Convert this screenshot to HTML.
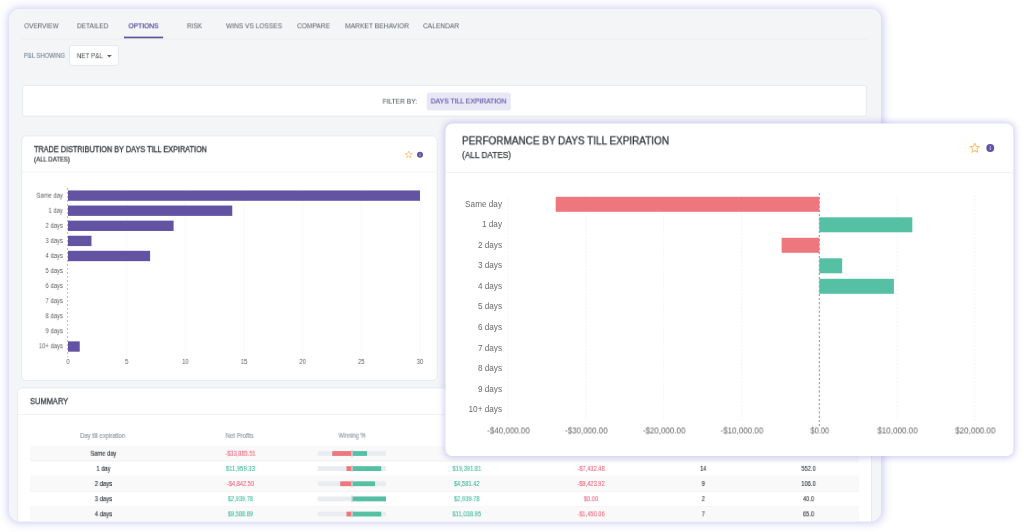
<!DOCTYPE html>
<html lang="en">
<head>
<meta charset="utf-8">
<title>Options - Days Till Expiration</title>
<style>
html,body{margin:0;padding:0;background:#fff;}
body{width:1024px;height:532px;position:relative;overflow:hidden;font-family:"Liberation Sans", sans-serif;}
#stage div,#stage svg{position:absolute;box-sizing:border-box;}
.t{position:absolute;white-space:pre;line-height:1;display:block;will-change:transform;}
</style>
</head>
<body>
<div id="stage">
<!-- layer 0 -->
<div style="left:9px;top:9px;width:872px;height:512px;background:#f4f5f7;border-radius:10px;box-shadow:0.5px 0.5px 9px 1px rgba(105,100,210,.34);"></div>
<svg style="left:0;top:0" width="1024" height="532" viewBox="0 0 1024 532">
<defs><clipPath id="clip0"><rect x="9.0" y="9.0" width="872.3" height="512.4" rx="10"/></clipPath></defs><g clip-path="url(#clip0)">
<rect x="9.00" y="9.00" width="872.30" height="512.40" fill="#f4f5f7" rx="10.00"/>
<rect x="22.00" y="38.60" width="845.00" height="0.80" fill="#e8eaed"/>
<rect x="124.00" y="36.60" width="39.10" height="1.70" fill="#6254a3"/>
<rect x="69.50" y="45.60" width="48.90" height="19.80" fill="#fff" rx="2.10" stroke="#e0e3e7" stroke-width="0.8"/>
<path d="M107 54.9h4.8l-2.4 2.5z" fill="#5d636a"/>
<rect x="22.68" y="85.58" width="843.55" height="30.45" fill="#fff" rx="1.12" stroke="#e4e6e9" stroke-width="0.75"/>
<rect x="426.60" y="92.60" width="84.20" height="18.00" fill="#e8e7f6" rx="3.00"/>
<rect x="21.65" y="135.85" width="415.50" height="244.60" fill="#fff" rx="4.55" stroke="#e7e9ec" stroke-width="0.9"/>
<rect x="22.00" y="171.70" width="415.00" height="0.80" fill="#f0f1f3"/>
<polygon points="408.80,151.00 409.78,153.35 412.32,153.56 410.38,155.21 410.97,157.69 408.80,156.36 406.63,157.69 407.22,155.21 405.28,153.56 407.82,153.35" fill="none" stroke="#fac373" stroke-width="0.85" stroke-linejoin="round"/>
<circle cx="420" cy="154.8" r="3.0" fill="#6254a3"/><circle cx="420" cy="153.54000000000002" r="0.39" fill="#fff" opacity=".8"/><rect x="419.67" y="154.35" width="0.66" height="1.80" fill="#fff" opacity=".8"/>
<line x1="126.67" y1="188" x2="126.67" y2="356" stroke="#f0f0f0" stroke-width="0.7" stroke-dasharray="1.5 1.2"/>
<line x1="185.33" y1="188" x2="185.33" y2="356" stroke="#f0f0f0" stroke-width="0.7" stroke-dasharray="1.5 1.2"/>
<line x1="244.00" y1="188" x2="244.00" y2="356" stroke="#f0f0f0" stroke-width="0.7" stroke-dasharray="1.5 1.2"/>
<line x1="302.67" y1="188" x2="302.67" y2="356" stroke="#f0f0f0" stroke-width="0.7" stroke-dasharray="1.5 1.2"/>
<line x1="361.33" y1="188" x2="361.33" y2="356" stroke="#f0f0f0" stroke-width="0.7" stroke-dasharray="1.5 1.2"/>
<line x1="420.00" y1="188" x2="420.00" y2="356" stroke="#f0f0f0" stroke-width="0.7" stroke-dasharray="1.5 1.2"/>
<line x1="67.6" y1="188" x2="67.6" y2="357" stroke="#9aacbe" stroke-width="0.8" stroke-dasharray="2 2"/>
<rect x="68.00" y="190.45" width="352.00" height="10.35" fill="#6254a3"/>
<rect x="68.00" y="205.54" width="164.27" height="10.35" fill="#6254a3"/>
<rect x="68.00" y="220.63" width="105.60" height="10.35" fill="#6254a3"/>
<rect x="68.00" y="235.72" width="23.47" height="10.35" fill="#6254a3"/>
<rect x="68.00" y="250.81" width="82.13" height="10.35" fill="#6254a3"/>
<rect x="68.00" y="341.35" width="11.73" height="10.35" fill="#6254a3"/>
<rect x="17.70" y="387.90" width="853.80" height="159.10" fill="#fff" rx="4.55" stroke="#e7e9ec" stroke-width="0.9"/>
<rect x="18.00" y="414.00" width="853.00" height="0.80" fill="#f0f1f3"/>
<rect x="30.00" y="445.90" width="829.00" height="15.10" fill="#f9f9fa"/>
<rect x="30.00" y="460.70" width="829.00" height="0.70" fill="#eeeef0"/>
<rect x="30.00" y="475.80" width="829.00" height="0.70" fill="#eeeef0"/>
<rect x="30.00" y="476.15" width="829.00" height="15.10" fill="#f9f9fa"/>
<rect x="30.00" y="490.95" width="829.00" height="0.70" fill="#eeeef0"/>
<rect x="30.00" y="506.10" width="829.00" height="0.70" fill="#eeeef0"/>
<rect x="30.00" y="506.45" width="829.00" height="15.10" fill="#f9f9fa"/>
<rect x="30.00" y="521.25" width="829.00" height="0.70" fill="#eeeef0"/>
<rect x="317.75" y="451.10" width="68.25" height="4.80" fill="#e9edf1"/>
<rect x="332.25" y="451.10" width="19.25" height="4.80" fill="#ed777c"/>
<rect x="352.50" y="451.10" width="14.50" height="4.80" fill="#56c0a5"/>
<rect x="351.60" y="449.70" width="0.80" height="7.40" fill="#bcc1c8"/>
<rect x="317.75" y="466.20" width="68.25" height="4.80" fill="#e9edf1"/>
<rect x="346.50" y="466.20" width="5.00" height="4.80" fill="#ed777c"/>
<rect x="352.50" y="466.20" width="28.75" height="4.80" fill="#56c0a5"/>
<rect x="351.60" y="464.80" width="0.80" height="7.40" fill="#bcc1c8"/>
<rect x="317.75" y="481.35" width="68.25" height="4.80" fill="#e9edf1"/>
<rect x="340.25" y="481.35" width="11.25" height="4.80" fill="#ed777c"/>
<rect x="352.50" y="481.35" width="22.50" height="4.80" fill="#56c0a5"/>
<rect x="351.60" y="479.95" width="0.80" height="7.40" fill="#bcc1c8"/>
<rect x="317.75" y="496.50" width="68.25" height="4.80" fill="#e9edf1"/>
<rect x="352.50" y="496.50" width="33.50" height="4.80" fill="#56c0a5"/>
<rect x="351.60" y="495.10" width="0.80" height="7.40" fill="#bcc1c8"/>
<rect x="317.75" y="511.65" width="68.25" height="4.80" fill="#e9edf1"/>
<rect x="346.50" y="511.65" width="5.00" height="4.80" fill="#ed777c"/>
<rect x="352.50" y="511.65" width="28.75" height="4.80" fill="#56c0a5"/>
<rect x="351.60" y="510.25" width="0.80" height="7.40" fill="#bcc1c8"/>
</g>
</svg>
<span class="t" style="left:24px;top:22px;font-size:7.4px;color:#555a62;transform:translate3d(0.20px,0.30px,0) scaleX(0.8664);transform-origin:0 50%;">OVERVIEW</span>
<span class="t" style="left:77px;top:22px;font-size:7.4px;color:#555a62;transform:translate3d(0.00px,0.30px,0) scaleX(0.8794);transform-origin:0 50%;">DETAILED</span>
<span class="t" style="left:128px;top:22px;font-size:7.4px;color:#554b9f;transform:translate3d(0.50px,0.30px,0) scaleX(0.9018);transform-origin:0 50%;-webkit-text-stroke:0.24px #554b9f;">OPTIONS</span>
<span class="t" style="left:187px;top:22px;font-size:7.4px;color:#555a62;transform:translate3d(0.00px,0.30px,0) scaleX(0.8812);transform-origin:0 50%;">RISK</span>
<span class="t" style="left:226px;top:22px;font-size:7.4px;color:#555a62;transform:translate3d(0.00px,0.30px,0) scaleX(0.8911);transform-origin:0 50%;">WINS VS LOSSES</span>
<span class="t" style="left:297px;top:22px;font-size:7.4px;color:#555a62;transform:translate3d(0.00px,0.30px,0) scaleX(0.8961);transform-origin:0 50%;">COMPARE</span>
<span class="t" style="left:345px;top:22px;font-size:7.4px;color:#555a62;transform:translate3d(0.00px,0.30px,0) scaleX(0.9094);transform-origin:0 50%;">MARKET BEHAVIOR</span>
<span class="t" style="left:423px;top:22px;font-size:7.4px;color:#555a62;transform:translate3d(0.00px,0.30px,0) scaleX(0.8944);transform-origin:0 50%;">CALENDAR</span>
<span class="t" style="left:24px;top:52px;font-size:6.5px;color:#6b7a8c;transform:translate3d(0.00px,0.85px,0) scaleX(0.8983);transform-origin:0 50%;-webkit-text-stroke:0.05px #6b7a8c;">P&amp;L SHOWING</span>
<span class="t" style="left:76px;top:52px;font-size:7.7px;color:#3f454c;transform:translate3d(0.80px,0.15px,0) scaleX(0.8149);transform-origin:0 50%;">NET P&amp;L</span>
<span class="t" style="left:382px;top:97px;font-size:7px;color:#565e68;transform:translate3d(0.60px,0.70px,0) scaleX(0.9441);transform-origin:0 50%;-webkit-text-stroke:0.12px #565e68;">FILTER BY:</span>
<span class="t" style="left:430px;top:97px;font-size:7.3px;color:#5d53a6;transform:translate3d(0.70px,0.45px,0) scaleX(0.9319);transform-origin:0 50%;-webkit-text-stroke:0.15px #5d53a6;">DAYS TILL EXPIRATION</span>
<span class="t" style="left:34px;top:145px;font-size:8.3px;color:#343a40;transform:translate3d(0.00px,0.15px,0) scaleX(0.8787);transform-origin:0 50%;-webkit-text-stroke:0.34px #343a40;">TRADE DISTRIBUTION BY DAYS TILL EXPIRATION</span>
<span class="t" style="left:34px;top:156px;font-size:6.4px;color:#343a40;transform:translate3d(0.00px,0.60px,0) scaleX(0.9474);transform-origin:0 50%;-webkit-text-stroke:0.2px #343a40;">(ALL DATES)</span>
<span class="t" style="left:32px;top:192px;font-size:6.8px;color:#5c5c5c;transform:translate3d(0.19px,0.75px,0) scaleX(0.8620);transform-origin:100% 50%;">Same day</span>
<span class="t" style="left:46px;top:207px;font-size:6.8px;color:#5c5c5c;transform:translate3d(0.16px,0.80px,0) scaleX(0.8620);transform-origin:100% 50%;">1 day</span>
<span class="t" style="left:42px;top:222px;font-size:6.8px;color:#5c5c5c;transform:translate3d(0.77px,0.85px,0) scaleX(0.8620);transform-origin:100% 50%;">2 days</span>
<span class="t" style="left:42px;top:237px;font-size:6.8px;color:#5c5c5c;transform:translate3d(0.77px,0.90px,0) scaleX(0.8620);transform-origin:100% 50%;">3 days</span>
<span class="t" style="left:42px;top:252px;font-size:6.8px;color:#5c5c5c;transform:translate3d(0.77px,0.95px,0) scaleX(0.8620);transform-origin:100% 50%;">4 days</span>
<span class="t" style="left:42px;top:268px;font-size:6.8px;color:#5c5c5c;transform:translate3d(0.77px,0.00px,0) scaleX(0.8620);transform-origin:100% 50%;">5 days</span>
<span class="t" style="left:42px;top:283px;font-size:6.8px;color:#5c5c5c;transform:translate3d(0.77px,0.05px,0) scaleX(0.8620);transform-origin:100% 50%;">6 days</span>
<span class="t" style="left:42px;top:298px;font-size:6.8px;color:#5c5c5c;transform:translate3d(0.77px,0.10px,0) scaleX(0.8620);transform-origin:100% 50%;">7 days</span>
<span class="t" style="left:42px;top:313px;font-size:6.8px;color:#5c5c5c;transform:translate3d(0.77px,0.15px,0) scaleX(0.8620);transform-origin:100% 50%;">8 days</span>
<span class="t" style="left:42px;top:328px;font-size:6.8px;color:#5c5c5c;transform:translate3d(0.77px,0.20px,0) scaleX(0.8620);transform-origin:100% 50%;">9 days</span>
<span class="t" style="left:35px;top:343px;font-size:6.8px;color:#5c5c5c;transform:translate3d(0.02px,0.25px,0) scaleX(0.8620);transform-origin:100% 50%;">10+ days</span>
<span class="t" style="left:66px;top:358px;font-size:6.8px;color:#5c5c5c;transform:translate3d(0.11px,0.90px,0) scaleX(0.8650);transform-origin:50% 50%;">0</span>
<span class="t" style="left:124px;top:358px;font-size:6.8px;color:#5c5c5c;transform:translate3d(0.78px,0.90px,0) scaleX(0.8650);transform-origin:50% 50%;">5</span>
<span class="t" style="left:181px;top:358px;font-size:6.8px;color:#5c5c5c;transform:translate3d(0.55px,0.90px,0) scaleX(0.8650);transform-origin:50% 50%;">10</span>
<span class="t" style="left:240px;top:358px;font-size:6.8px;color:#5c5c5c;transform:translate3d(0.22px,0.90px,0) scaleX(0.8650);transform-origin:50% 50%;">15</span>
<span class="t" style="left:298px;top:358px;font-size:6.8px;color:#5c5c5c;transform:translate3d(0.89px,0.90px,0) scaleX(0.8650);transform-origin:50% 50%;">20</span>
<span class="t" style="left:357px;top:358px;font-size:6.8px;color:#5c5c5c;transform:translate3d(0.55px,0.90px,0) scaleX(0.8650);transform-origin:50% 50%;">25</span>
<span class="t" style="left:416px;top:358px;font-size:6.8px;color:#5c5c5c;transform:translate3d(0.22px,0.90px,0) scaleX(0.8650);transform-origin:50% 50%;">30</span>
<span class="t" style="left:30px;top:397px;font-size:8.3px;color:#343a40;transform:translate3d(0.10px,0.15px,0) scaleX(0.8991);transform-origin:0 50%;-webkit-text-stroke:0.28px #343a40;">SUMMARY</span>
<span class="t" style="left:77px;top:432px;font-size:6.5px;color:#98a4b0;transform:translate3d(0.85px,0.95px,0) scaleX(0.9091);transform-origin:50% 50%;-webkit-text-stroke:0.2px #98a4b0;">Day till expiration</span>
<span class="t" style="left:224px;top:432px;font-size:6.5px;color:#98a4b0;transform:translate3d(0.43px,0.95px,0) scaleX(0.9228);transform-origin:50% 50%;-webkit-text-stroke:0.2px #98a4b0;">Net Profits</span>
<span class="t" style="left:336px;top:432px;font-size:6.5px;color:#98a4b0;transform:translate3d(0.46px,0.75px,0) scaleX(0.8688);transform-origin:50% 50%;-webkit-text-stroke:0.2px #98a4b0;">Winning %</span>
<span class="t" style="left:88px;top:450px;font-size:6.5px;color:#2a2e33;transform:translate3d(0.76px,0.75px,0) scaleX(0.8811);transform-origin:50% 50%;-webkit-text-stroke:0.12px #2a2e33;">Same day</span>
<span class="t" style="left:223px;top:450px;font-size:6.5px;color:#f1627a;transform:translate3d(0.05px,0.75px,0) scaleX(0.8789);transform-origin:50% 50%;-webkit-text-stroke:0.08px #f1627a;">-$33,885.51</span>
<span class="t" style="left:95px;top:465px;font-size:6.5px;color:#2a2e33;transform:translate3d(0.45px,0.85px,0) scaleX(0.8676);transform-origin:50% 50%;-webkit-text-stroke:0.12px #2a2e33;">1 day</span>
<span class="t" style="left:224px;top:465px;font-size:6.5px;color:#3ab89a;transform:translate3d(0.37px,0.85px,0) scaleX(0.9045);transform-origin:50% 50%;-webkit-text-stroke:0.08px #3ab89a;">$11,959.33</span>
<span class="t" style="left:450px;top:465px;font-size:6.5px;color:#3ab89a;transform:translate3d(0.53px,0.85px,0) scaleX(0.8757);transform-origin:50% 50%;-webkit-text-stroke:0.08px #3ab89a;">$19,391.81</span>
<span class="t" style="left:575px;top:465px;font-size:6.5px;color:#f1627a;transform:translate3d(0.45px,0.85px,0) scaleX(0.8780);transform-origin:50% 50%;-webkit-text-stroke:0.08px #f1627a;">-$7,432.48</span>
<span class="t" style="left:699px;top:465px;font-size:6.5px;color:#2a2e33;transform:translate3d(0.68px,0.85px,0) scaleX(0.8570);transform-origin:50% 50%;-webkit-text-stroke:0.08px #2a2e33;">14</span>
<span class="t" style="left:800px;top:465px;font-size:6.5px;color:#2a2e33;transform:translate3d(0.36px,0.85px,0) scaleX(0.8722);transform-origin:50% 50%;-webkit-text-stroke:0.08px #2a2e33;">552.0</span>
<span class="t" style="left:93px;top:481px;font-size:6.5px;color:#2a2e33;transform:translate3d(0.82px,0.00px,0) scaleX(0.9031);transform-origin:50% 50%;-webkit-text-stroke:0.12px #2a2e33;">2 days</span>
<span class="t" style="left:224px;top:481px;font-size:6.5px;color:#f1627a;transform:translate3d(0.85px,0.00px,0) scaleX(0.8780);transform-origin:50% 50%;-webkit-text-stroke:0.08px #f1627a;">-$4,842.50</span>
<span class="t" style="left:452px;top:481px;font-size:6.5px;color:#3ab89a;transform:translate3d(0.34px,0.00px,0) scaleX(0.8817);transform-origin:50% 50%;-webkit-text-stroke:0.08px #3ab89a;">$4,581.42</span>
<span class="t" style="left:575px;top:481px;font-size:6.5px;color:#f1627a;transform:translate3d(0.45px,0.00px,0) scaleX(0.8780);transform-origin:50% 50%;-webkit-text-stroke:0.08px #f1627a;">-$9,423.92</span>
<span class="t" style="left:701px;top:481px;font-size:6.5px;color:#2a2e33;transform:translate3d(0.49px,0.00px,0) scaleX(0.8828);transform-origin:50% 50%;-webkit-text-stroke:0.08px #2a2e33;">9</span>
<span class="t" style="left:800px;top:481px;font-size:6.5px;color:#2a2e33;transform:translate3d(0.36px,0.00px,0) scaleX(0.8722);transform-origin:50% 50%;-webkit-text-stroke:0.08px #2a2e33;">106.0</span>
<span class="t" style="left:93px;top:496px;font-size:6.5px;color:#2a2e33;transform:translate3d(0.82px,0.15px,0) scaleX(0.9031);transform-origin:50% 50%;-webkit-text-stroke:0.12px #2a2e33;">3 days</span>
<span class="t" style="left:225px;top:496px;font-size:6.5px;color:#3ab89a;transform:translate3d(0.94px,0.15px,0) scaleX(0.8644);transform-origin:50% 50%;-webkit-text-stroke:0.08px #3ab89a;">$2,939.78</span>
<span class="t" style="left:452px;top:496px;font-size:6.5px;color:#3ab89a;transform:translate3d(0.34px,0.15px,0) scaleX(0.8817);transform-origin:50% 50%;-webkit-text-stroke:0.08px #3ab89a;">$2,939.78</span>
<span class="t" style="left:582px;top:496px;font-size:6.5px;color:#f1627a;transform:translate3d(0.86px,0.15px,0) scaleX(0.8722);transform-origin:50% 50%;-webkit-text-stroke:0.08px #f1627a;">$0.00</span>
<span class="t" style="left:701px;top:496px;font-size:6.5px;color:#2a2e33;transform:translate3d(0.49px,0.15px,0) scaleX(0.8828);transform-origin:50% 50%;-webkit-text-stroke:0.08px #2a2e33;">2</span>
<span class="t" style="left:802px;top:496px;font-size:6.5px;color:#2a2e33;transform:translate3d(0.17px,0.15px,0) scaleX(0.8849);transform-origin:50% 50%;-webkit-text-stroke:0.08px #2a2e33;">40.0</span>
<span class="t" style="left:93px;top:511px;font-size:6.5px;color:#2a2e33;transform:translate3d(0.82px,0.30px,0) scaleX(0.9031);transform-origin:50% 50%;-webkit-text-stroke:0.12px #2a2e33;">4 days</span>
<span class="t" style="left:225px;top:511px;font-size:6.5px;color:#3ab89a;transform:translate3d(0.94px,0.30px,0) scaleX(0.8644);transform-origin:50% 50%;-webkit-text-stroke:0.08px #3ab89a;">$9,588.89</span>
<span class="t" style="left:450px;top:511px;font-size:6.5px;color:#3ab89a;transform:translate3d(0.77px,0.30px,0) scaleX(0.8889);transform-origin:50% 50%;-webkit-text-stroke:0.08px #3ab89a;">$11,038.95</span>
<span class="t" style="left:575px;top:511px;font-size:6.5px;color:#f1627a;transform:translate3d(0.45px,0.30px,0) scaleX(0.8780);transform-origin:50% 50%;-webkit-text-stroke:0.08px #f1627a;">-$1,450.06</span>
<span class="t" style="left:701px;top:511px;font-size:6.5px;color:#2a2e33;transform:translate3d(0.49px,0.30px,0) scaleX(0.8828);transform-origin:50% 50%;-webkit-text-stroke:0.08px #2a2e33;">7</span>
<span class="t" style="left:802px;top:511px;font-size:6.5px;color:#2a2e33;transform:translate3d(0.17px,0.30px,0) scaleX(0.8849);transform-origin:50% 50%;-webkit-text-stroke:0.08px #2a2e33;">65.0</span>
<!-- layer 1 -->
<div style="left:446px;top:124px;width:567px;height:332px;background:#fff;border-radius:7px;box-shadow:0 0 6.5px 1.5px rgba(115,108,220,.34);"></div>
<svg style="left:0;top:0" width="1024" height="532" viewBox="0 0 1024 532">
<rect x="445.50" y="123.60" width="567.80" height="332.50" fill="#fff" rx="7.00"/>
<rect x="445.50" y="172.00" width="567.80" height="0.80" fill="#f0f1f3"/>
<polygon points="974.85,143.20 976.17,146.38 979.61,146.65 976.99,148.90 977.79,152.25 974.85,150.45 971.91,152.25 972.71,148.90 970.09,146.65 973.53,146.38" fill="none" stroke="#fac373" stroke-width="1.05" stroke-linejoin="round"/>
<circle cx="990.25" cy="148.05" r="3.95" fill="#6254a3"/><circle cx="990.25" cy="146.39100000000002" r="0.5135000000000001" fill="#fff" opacity=".8"/><rect x="989.82" y="147.46" width="0.87" height="2.37" fill="#fff" opacity=".8"/>
<line x1="508.10" y1="195" x2="508.10" y2="421" stroke="#f1f1f1" stroke-width="0.8" stroke-dasharray="2 1.5"/>
<line x1="585.90" y1="195" x2="585.90" y2="421" stroke="#f1f1f1" stroke-width="0.8" stroke-dasharray="2 1.5"/>
<line x1="663.70" y1="195" x2="663.70" y2="421" stroke="#f1f1f1" stroke-width="0.8" stroke-dasharray="2 1.5"/>
<line x1="741.50" y1="195" x2="741.50" y2="421" stroke="#f1f1f1" stroke-width="0.8" stroke-dasharray="2 1.5"/>
<line x1="897.10" y1="195" x2="897.10" y2="421" stroke="#f1f1f1" stroke-width="0.8" stroke-dasharray="2 1.5"/>
<line x1="974.90" y1="195" x2="974.90" y2="421" stroke="#f1f1f1" stroke-width="0.8" stroke-dasharray="2 1.5"/>
<line x1="819.3" y1="193" x2="819.3" y2="426" stroke="#4e7484" stroke-width="0.75" stroke-dasharray="2.2 2"/>
<rect x="555.67" y="196.80" width="263.63" height="15.00" fill="#ed777c"/>
<rect x="819.30" y="217.30" width="93.04" height="15.00" fill="#56c0a5"/>
<rect x="781.63" y="237.80" width="37.67" height="15.00" fill="#ed777c"/>
<rect x="819.30" y="258.30" width="22.87" height="15.00" fill="#56c0a5"/>
<rect x="819.30" y="278.80" width="74.60" height="15.00" fill="#56c0a5"/>
</svg>
<span class="t" style="left:462px;top:135px;font-size:10.9px;color:#343a40;transform:translate3d(0.00px,0.35px,0) scaleX(0.9145);transform-origin:0 50%;-webkit-text-stroke:0.32px #343a40;">PERFORMANCE BY DAYS TILL EXPIRATION</span>
<span class="t" style="left:462px;top:150px;font-size:8.8px;color:#343a40;transform:translate3d(0.00px,0.90px,0) scaleX(0.9367);transform-origin:0 50%;-webkit-text-stroke:0.25px #343a40;">(ALL DATES)</span>
<span class="t" style="left:465px;top:200px;font-size:8.2px;color:#6a6a6a;transform:translate3d(0.12px,0.80px,0);transform-origin:100% 50%;">Same day</span>
<span class="t" style="left:481px;top:221px;font-size:8.2px;color:#6a6a6a;transform:translate3d(0.97px,0.33px,0);transform-origin:100% 50%;">1 day</span>
<span class="t" style="left:477px;top:241px;font-size:8.2px;color:#6a6a6a;transform:translate3d(0.88px,0.86px,0);transform-origin:100% 50%;">2 days</span>
<span class="t" style="left:477px;top:262px;font-size:8.2px;color:#6a6a6a;transform:translate3d(0.88px,0.39px,0);transform-origin:100% 50%;">3 days</span>
<span class="t" style="left:477px;top:282px;font-size:8.2px;color:#6a6a6a;transform:translate3d(0.88px,0.92px,0);transform-origin:100% 50%;">4 days</span>
<span class="t" style="left:477px;top:303px;font-size:8.2px;color:#6a6a6a;transform:translate3d(0.88px,0.45px,0);transform-origin:100% 50%;">5 days</span>
<span class="t" style="left:477px;top:323px;font-size:8.2px;color:#6a6a6a;transform:translate3d(0.88px,0.98px,0);transform-origin:100% 50%;">6 days</span>
<span class="t" style="left:477px;top:344px;font-size:8.2px;color:#6a6a6a;transform:translate3d(0.88px,0.51px,0);transform-origin:100% 50%;">7 days</span>
<span class="t" style="left:477px;top:365px;font-size:8.2px;color:#6a6a6a;transform:translate3d(0.88px,0.04px,0);transform-origin:100% 50%;">8 days</span>
<span class="t" style="left:477px;top:385px;font-size:8.2px;color:#6a6a6a;transform:translate3d(0.88px,0.57px,0);transform-origin:100% 50%;">9 days</span>
<span class="t" style="left:468px;top:406px;font-size:8.2px;color:#6a6a6a;transform:translate3d(0.53px,0.10px,0);transform-origin:100% 50%;">10+ days</span>
<span class="t" style="left:486px;top:427px;font-size:8.2px;color:#666;transform:translate3d(0.64px,0.50px,0) scaleX(0.9744);transform-origin:50% 50%;">-$40,000.00</span>
<span class="t" style="left:564px;top:427px;font-size:8.2px;color:#666;transform:translate3d(0.44px,0.50px,0) scaleX(0.9744);transform-origin:50% 50%;">-$30,000.00</span>
<span class="t" style="left:642px;top:427px;font-size:8.2px;color:#666;transform:translate3d(0.24px,0.50px,0) scaleX(0.9744);transform-origin:50% 50%;">-$20,000.00</span>
<span class="t" style="left:720px;top:427px;font-size:8.2px;color:#666;transform:translate3d(0.04px,0.50px,0) scaleX(0.9744);transform-origin:50% 50%;">-$10,000.00</span>
<span class="t" style="left:809px;top:427px;font-size:8.2px;color:#666;transform:translate3d(0.45px,0.50px,0) scaleX(0.9073);transform-origin:50% 50%;">$0.00</span>
<span class="t" style="left:877px;top:427px;font-size:8.2px;color:#666;transform:translate3d(0.01px,0.50px,0) scaleX(0.9809);transform-origin:50% 50%;">$10,000.00</span>
<span class="t" style="left:954px;top:427px;font-size:8.2px;color:#666;transform:translate3d(0.81px,0.50px,0) scaleX(0.9809);transform-origin:50% 50%;">$20,000.00</span>
</div>
</body>
</html>
